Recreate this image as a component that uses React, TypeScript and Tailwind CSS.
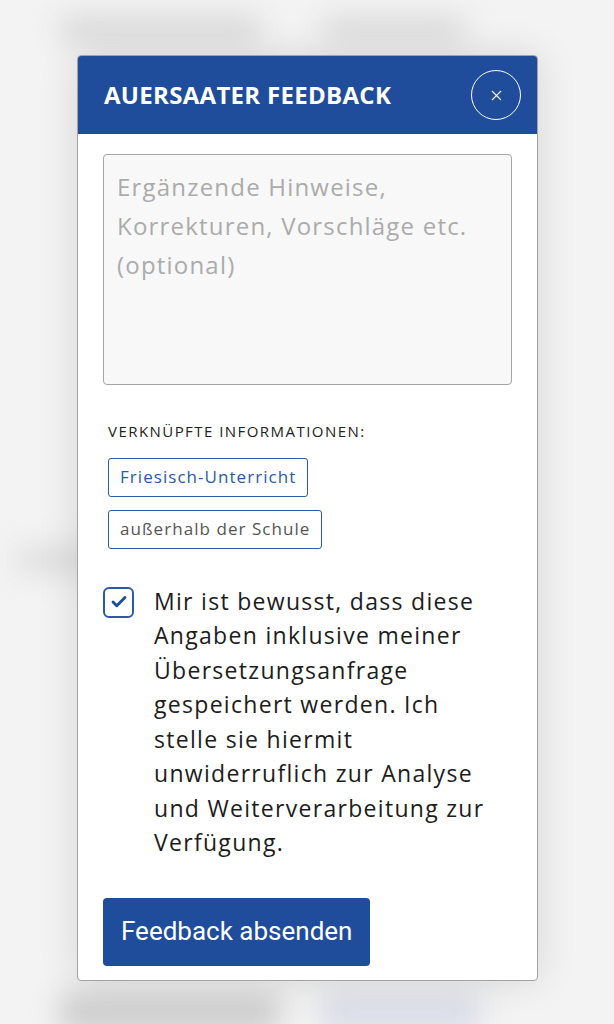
import { Check, X } from "lucide-react";

const font = { fontFamily: "'Open Sans', 'Noto Sans', sans-serif" };

const Tag = ({ label, blue }: { label: string; blue?: boolean }) => (
  <span
    className={`inline-block rounded-[3px] border-[1.5px] border-[#2c5aa8] px-[11px] py-[7.5px] text-[17px] leading-[22px] tracking-[1.05px] ${
      blue ? "text-[#2c5aa8]" : "text-[#555]"
    }`}
  >
    {label}
  </span>
);

const App = () => {
  return (
    <div className="relative h-[1024px] w-[614px] overflow-hidden bg-[#f3f3f3]" style={font}>
      {/* blurred page behind the dialog */}
      <div className="flex flex-col px-[60px] pt-[16px] blur-[14px]">
        <div className="flex gap-16">
          <div className="h-[26px] w-[200px] rounded bg-[#d8d8d8]" />
          <div className="h-[26px] w-[140px] rounded bg-[#dadada]" />
        </div>
        <div className="h-[505px]" />
        <div className="-ml-[40px] h-[26px] w-[80px] rounded bg-[#dcdcdc]" />
        <div className="h-[420px]" />
        <div className="flex gap-10">
          <div className="h-[40px] w-[220px] rounded bg-[#cdcdcd]" />
          <div className="h-[40px] w-[160px] rounded bg-[#d9dde6]" />
        </div>
      </div>

      {/* dialog */}
      <div className="absolute left-[77px] top-[55px] w-[461px] overflow-hidden rounded-[4px] border border-[#a3a3a3] bg-white shadow-[0_0_40px_rgba(0,0,0,0.12)]">
        <div className="flex h-[78px] items-center justify-between bg-[#1f4d9b] pl-[26px] pr-[16px]">
          <h1 className="text-[24px] font-bold tracking-[0.3px] text-white">AUERSAATER FEEDBACK</h1>
          <button className="flex h-[50px] w-[50px] items-center justify-center rounded-full border-[1.5px] border-white text-white">
            <X size={17} strokeWidth={1.6} />
          </button>
        </div>

        <div className="px-[25px] pb-[14px] pt-[20px]">
          <textarea
            className="block h-[231px] w-full resize-none rounded-[4px] border-[1.5px] border-[#a5a5a5] bg-[#f8f8f8] px-[13px] pb-[13px] pt-[12px] text-[24px] leading-[39px] tracking-[1.2px] placeholder:text-[#ababab]"
            placeholder={"Ergänzende Hinweise,\nKorrekturen, Vorschläge etc.\n(optional)"}
          />

          <p className="mt-[35px] pl-[5px] text-[15px] uppercase tracking-[1.45px] text-[#222]">
            Verknüpfte Informationen:
          </p>

          <div className="mt-[15px] flex flex-col items-start gap-[13px] pl-[5px]">
            <Tag label="Friesisch-Unterricht" blue />
            <Tag label="außerhalb der Schule" />
          </div>

          <label className="mt-[37px] flex items-start gap-[20px]">
            <span className="mt-[1px] flex h-[31px] w-[31px] shrink-0 items-center justify-center rounded-[6px] border-[2.5px] border-[#2c5aa8] text-[#1f4d9b]">
              <Check size={18} strokeWidth={3.8} />
            </span>
            <span className="-mt-[2px] text-[23px] leading-[34.5px] tracking-[1.3px] text-[#1c1c1c]">
              Mir ist bewusst, dass diese
              <br />
              Angaben inklusive meiner
              <br />
              Übersetzungsanfrage
              <br />
              gespeichert werden. Ich
              <br />
              stelle sie hiermit
              <br />
              unwiderruflich zur Analyse
              <br />
              und Weiterverarbeitung zur
              <br />
              Verfügung.
            </span>
          </label>

          <button
            className="mt-[38px] h-[68px] rounded-[4px] bg-[#1f4d9b] px-[18px] text-[26px] text-white"
            style={{ fontFamily: "Roboto, 'Liberation Sans', sans-serif" }}
          >
            Feedback absenden
          </button>
        </div>
      </div>
    </div>
  );
};

export default App;
